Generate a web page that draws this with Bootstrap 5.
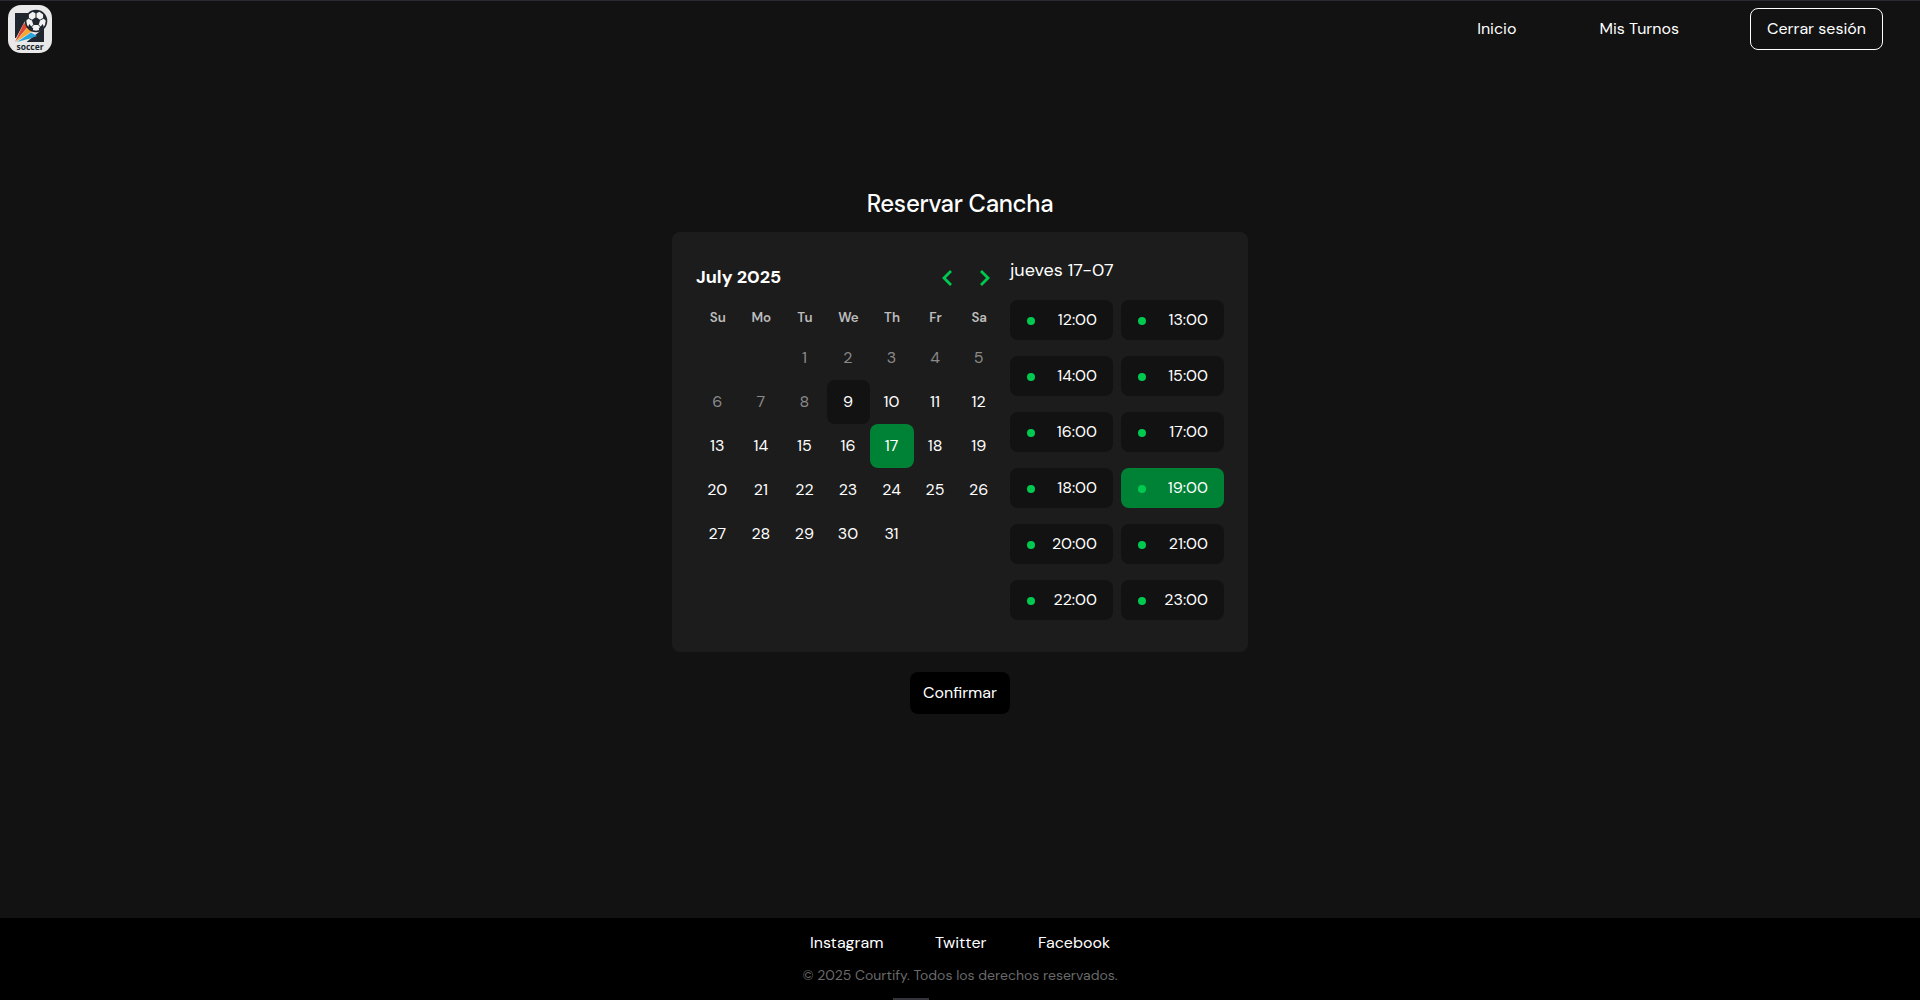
<!DOCTYPE html>
<html lang="es">
<head>
<meta charset="utf-8">
<meta name="viewport" content="width=device-width, initial-scale=1">
<title>Courtify - Reservar Cancha</title>
<link rel="stylesheet" href="https://cdn.jsdelivr.net/npm/bootstrap@5.3.0/dist/css/bootstrap.min.css">
<style>
  body { background: #121212; color: #fff; font-family: "DM Sans", Inter, sans-serif; font-size: 16px; font-weight: 400; line-height: 24px; height: 1000px; overflow: hidden; }
  a { color: #fff; text-decoration: none; }
  .topbar { height: 57px; border-top: 1px solid #2b2a33; padding: 0 37px 0 8px; }
  .brand-logo { display: block; margin-top: -1px; }
  .topbar .menu { gap: 71px; }
  .topbar .menu a:first-child { margin-right: 12px; }
  .btn-exit { width: 133px; height: 42px; border: 1px solid #fff; border-radius: 8px; padding: 0; color: #fff; }
  .page-title { font-size: 24px; line-height: 32px; font-weight: 500; letter-spacing: -.01em; margin: 131px 0 12px; }
  .booking { width: 576px; height: 420px; background: #1c1c1c; border-radius: 8px; padding: 24px; gap: 8px; }
  .cal { width: 306px; }
  .cal-head { height: 42px; font-size: 18px; font-weight: 700; padding: 0 8px 0 0; }
  .cal-head .arrows { gap: 17px; }
  .cal table { width: 305px; table-layout: fixed; border-collapse: collapse; text-align: center; }
  .cal th { height: 38px; padding: 2px 0 0; font-size: 13.33px; font-weight: 600; color: #bdbdbd; }
  .cal td { height: 44px; padding: 0 1px 0 0; border-radius: 8px; }
  .cal .past { color: #8a8a8a; }
  .cal .today { background: #121212; }
  .cal .chosen { background: #008236; }
  .hours { width: 214px; }
  .hours h2 { font-size: 18px; font-weight: 400; line-height: 28px; margin: 0 0 16px; }
  .slots { display: grid; grid-template-columns: 1fr 1fr; gap: 16px 8px; }
  .slot { height: 40px; background: #121212; border: 0; border-radius: 8px; color: #fff; padding: 0 16px 0 17px; }
  .slot.active { background: #008236; }
  .slot i { width: 8px; height: 8px; border-radius: 50%; background: #00c950; margin-top: 1px; }
  .btn-ok { width: 100px; height: 42px; background: #000; border: 0; color: #fff; border-radius: 8px; padding: 0; margin-top: 20px; }
  .foot { background: #000; height: 82px; padding-top: 13px; }
  .foot .links { gap: 51.5px; }
  .foot p { font-size: 14px; line-height: 20px; color: #6a6a6a; margin: 10px 0 0; }
  .grip { width: 36px; height: 2px; background: #35343c; left: 893px; bottom: 0; }
</style>
</head>
<body class="d-flex flex-column">
<nav class="topbar d-flex align-items-center justify-content-between flex-shrink-0">
  <a href="#" class="brand-logo" aria-label="Soccer">
    <svg width="44" height="48" viewBox="0 0 44 48" class="d-block">
      <rect width="44" height="48" rx="13" fill="#e9e9e9"/>
      <path d="M7 8h17l-7 8L8 33H7z" fill="#20262d"/>
      <path d="M18.500 37 36 23v14z" fill="#20262d"/>
      <path d="M7 37 16 18l4.500 3z" fill="#e0452f"/>
      <path d="M7.500 37 20 22l4.500 4z" fill="#f6a531"/>
      <path d="M9 37 23 27.500l6 3.500-7 2.500z" fill="#28a4dc"/>
      <circle cx="28" cy="16" r="10.500" fill="#f2f2f2" stroke="#20262d" stroke-width="1.600"/>
      <g fill="#20262d"><path d="m28 12 4.200 3-1.600 4.900h-5.200L23.800 15z"/><path d="m24 6.500 4 2 4-2-4-1.300zM18 15.500l3-2-.2-4.500-2.300 3zM38 15.500l-3-2 .2-4.500 2.300 3zM20 22.500l1.200-3.500 4 4.500-.5 2.200zM36 22.500 34.800 19l-4 4.500.5 2.200z"/></g>
      <path d="M28 12V8M23.800 15 21 13.500M32.200 15l2.800-1.500M25.400 20l-2 2M30.600 20l2 2" stroke="#20262d"/>
      <text x="22" y="45" text-anchor="middle" textLength="27" lengthAdjust="spacingAndGlyphs" font-family="Open Sans, sans-serif" font-weight="700" font-size="9" fill="#20262d">soccer</text>
    </svg>
  </a>
  <div class="menu d-flex align-items-center">
    <a href="#">Inicio</a>
    <a href="#">Mis Turnos</a>
    <button class="btn btn-exit" type="button">Cerrar sesión</button>
  </div>
</nav>
<main class="d-flex flex-column align-items-center flex-grow-1">
  <h1 class="page-title">Reservar Cancha</h1>
  <section class="booking d-flex">
    <div class="cal">
      <div class="cal-head d-flex align-items-center justify-content-between">
        <span>July 2025</span>
        <div class="arrows d-flex">
          <svg width="20" height="24" viewBox="0 0 20 24" fill="none" stroke="#00c950" stroke-width="2.800"><path d="m14 6-7 7 7 7"/></svg>
          <svg width="20" height="24" viewBox="0 0 20 24" fill="none" stroke="#00c950" stroke-width="2.800"><path d="m7 6 7 7-7 7"/></svg>
        </div>
      </div>
      <table>
        <thead><tr><th>Su</th><th>Mo</th><th>Tu</th><th>We</th><th>Th</th><th>Fr</th><th>Sa</th></tr></thead>
        <tbody>
          <tr class="past"><td></td><td></td><td>1</td><td>2</td><td>3</td><td>4</td><td>5</td></tr>
          <tr><td class="past">6</td><td class="past">7</td><td class="past">8</td><td class="today">9</td><td>10</td><td>11</td><td>12</td></tr>
          <tr><td>13</td><td>14</td><td>15</td><td>16</td><td class="chosen">17</td><td>18</td><td>19</td></tr>
          <tr><td>20</td><td>21</td><td>22</td><td>23</td><td>24</td><td>25</td><td>26</td></tr>
          <tr><td>27</td><td>28</td><td>29</td><td>30</td><td>31</td><td></td><td></td></tr>
        </tbody>
      </table>
    </div>
    <div class="hours">
      <h2>jueves 17-07</h2>
      <div class="slots">
        <button class="slot d-flex align-items-center justify-content-between"><i></i>12:00</button>
        <button class="slot d-flex align-items-center justify-content-between"><i></i>13:00</button>
        <button class="slot d-flex align-items-center justify-content-between"><i></i>14:00</button>
        <button class="slot d-flex align-items-center justify-content-between"><i></i>15:00</button>
        <button class="slot d-flex align-items-center justify-content-between"><i></i>16:00</button>
        <button class="slot d-flex align-items-center justify-content-between"><i></i>17:00</button>
        <button class="slot d-flex align-items-center justify-content-between"><i></i>18:00</button>
        <button class="slot active d-flex align-items-center justify-content-between"><i></i>19:00</button>
        <button class="slot d-flex align-items-center justify-content-between"><i></i>20:00</button>
        <button class="slot d-flex align-items-center justify-content-between"><i></i>21:00</button>
        <button class="slot d-flex align-items-center justify-content-between"><i></i>22:00</button>
        <button class="slot d-flex align-items-center justify-content-between"><i></i>23:00</button>
      </div>
    </div>
  </section>
  <button class="btn btn-ok" type="button">Confirmar</button>
</main>
<footer class="foot position-relative text-center flex-shrink-0">
  <div class="links d-flex justify-content-center"><a href="#">Instagram</a><a href="#">Twitter</a><a href="#">Facebook</a></div>
  <p>© 2025 Courtify. Todos los derechos reservados.</p>
  <span class="grip position-absolute"></span>
</footer>
<script src="https://cdn.jsdelivr.net/npm/bootstrap@5.3.0/dist/js/bootstrap.bundle.min.js"></script>
</body>
</html>
